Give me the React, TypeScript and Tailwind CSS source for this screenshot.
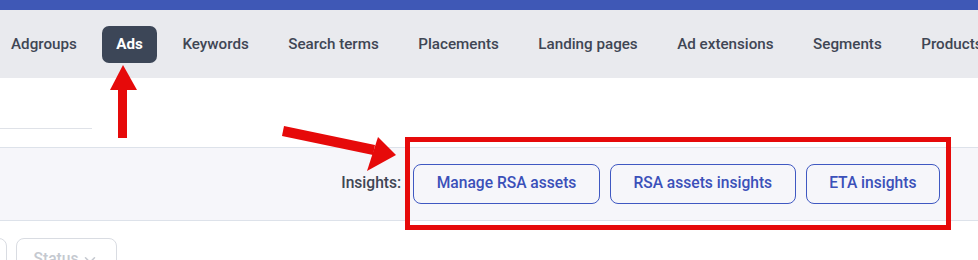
import { ChevronDown } from "lucide-react";

const tabs = [
  "Adgroups",
  "Ads",
  "Keywords",
  "Search terms",
  "Placements",
  "Landing pages",
  "Ad extensions",
  "Segments",
  "Products",
];

const insights = ["Manage RSA assets", "RSA assets insights", "ETA insights"];

export default function App() {
  return (
    <div className="relative w-[978px] h-[260px] overflow-hidden bg-white font-['Roboto','Liberation_Sans',sans-serif]">
      {/* top brand strip */}
      <div className="h-[10px] bg-[#3f58b6]" />

      {/* tab navigation */}
      <nav className="h-[68px] bg-[#e9eaee] flex items-center gap-[10.5px] -ml-[3.5px] whitespace-nowrap">
        {tabs.map((t) => (
          <a
            key={t}
            className={
              t === "Ads"
                ? "h-[37px] px-[14.5px] flex items-center rounded-[7px] bg-[#3c4657] text-white text-[15.2px] font-bold"
                : "h-[37px] px-[14.5px] flex items-center text-[#3f4654] text-[15.2px] font-medium"
            }
          >
            {t}
          </a>
        ))}
      </nav>

      {/* search field area */}
      <div className="h-[69px] pt-[50px]">
        <div className="w-[92px] border-b border-[#dfe2e8]" />
      </div>

      {/* insights toolbar */}
      <div className="h-[74px] bg-[#f6f6fa] border-y border-[#dde2ea] flex items-center justify-end pr-[38px]">
        <span className="mr-[12px] text-[15.6px] font-medium text-[#3f4654]">
          Insights:
        </span>
        <div className="flex gap-[10px]">
          {insights.map((b) => (
            <button
              key={b}
              className="h-[40px] px-[22.5px] rounded-[8px] border border-[#3f58c2] text-[15.6px] font-medium text-[#3b50b9] bg-transparent"
            >
              {b}
            </button>
          ))}
        </div>
      </div>

      {/* filter chips row */}
      <div className="flex gap-[9px] pt-[17px] -ml-[100px]">
        <div className="w-[107px] h-[40px] rounded-[8px] border border-[#d9dce2]" />
        <div className="h-[40px] w-[101px] pt-[3px] rounded-[8px] border border-[#d9dce2] flex items-center justify-center gap-[3px] text-[15.6px] font-medium text-[#c5c9d0]">
          Status
          <ChevronDown className="w-[18px] h-[18px]" strokeWidth={2} />
        </div>
      </div>

      {/* annotations */}
      <div className="absolute left-[405px] top-[137px] w-[546px] h-[93px] border-[5px] border-[#e60a0a]" />
      <svg
        className="absolute left-0 top-0"
        width="978"
        height="260"
        viewBox="0 0 978 260"
      >
        <rect x="118" y="88" width="9" height="50" fill="#e60a0a" />
        <polygon points="123,65 110,90 137,90" fill="#e60a0a" />
        <line
          x1="283"
          y1="131"
          x2="374"
          y2="150"
          stroke="#e60a0a"
          strokeWidth="10"
        />
        <polygon points="396,155 378,137 367,171" fill="#e60a0a" />
      </svg>
    </div>
  );
}
